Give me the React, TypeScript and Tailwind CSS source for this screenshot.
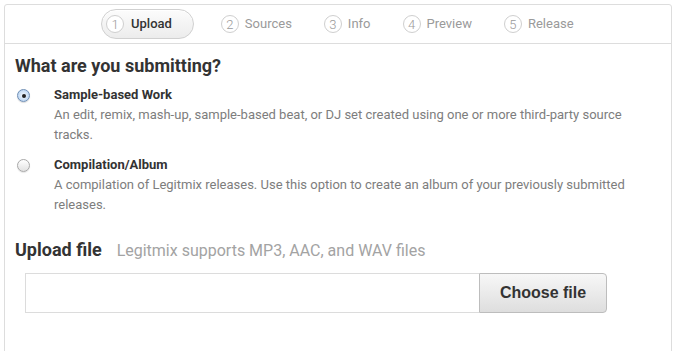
import React from "react";

const steps = ["Sources", "Info", "Preview", "Release"];

function StepNum({ n }: { n: number }) {
  return (
    <span className="flex h-[18px] w-[18px] items-center justify-center rounded-full border border-[#cfcfcf] bg-white text-[13px] font-light leading-none text-[#9a9a9a]">
      {n}
    </span>
  );
}

function Radio({ checked }: { checked?: boolean }) {
  if (checked) {
    return (
      <span className="mt-[4px] ml-[2px] flex h-[13px] w-[13px] items-center justify-center rounded-full border border-[#6f8fb5] bg-[radial-gradient(circle,#e8f2fc_20%,#a9c9ee_100%)] shadow-[0_1px_1px_rgba(0,0,0,0.15)]">
        <span className="h-[4px] w-[4px] rounded-full bg-[#222]" />
      </span>
    );
  }
  return (
    <span className="mt-[4px] ml-[2px] block h-[13px] w-[13px] rounded-full border border-[#a8a8a8] bg-gradient-to-b from-white to-[#e2e2e2] shadow-[0_1px_1px_rgba(0,0,0,0.1)]" />
  );
}

function Option({ checked, title, desc }: { checked?: boolean; title: string; desc: string }) {
  return (
    <div className="flex">
      <div className="w-[39px] shrink-0">
        <Radio checked={checked} />
      </div>
      <div className="w-[590px]">
        <div className="text-[13px] font-bold leading-[20px] text-[#333]">{title}</div>
        <p className="text-[13px] leading-[20px] text-[#7d7d7d]">{desc}</p>
      </div>
    </div>
  );
}

export default function App() {
  return (
    <div className="h-[351px] overflow-hidden bg-white font-['Roboto',sans-serif]">
      <div className="ml-[4px] mt-[4px] h-[360px] w-[668px] rounded-t-[3px] border border-[#dddddd]">
        <div className="flex h-[39px] items-center border-b border-[#dddddd] pl-[96px]">
          <div className="flex h-[30px] items-center gap-[7px] rounded-full border border-[#d0d0d0] bg-gradient-to-b from-[#fcfcfc] to-[#ececec] pl-[4px] pr-[21px] shadow-[inset_0_1px_0_#fff]">
            <StepNum n={1} />
            <span className="text-[13px] font-medium text-[#333]">Upload</span>
          </div>
          {steps.map((s, i) => (
            <div key={s} className={`flex items-center gap-[6px] ${i === 0 ? "ml-[27px]" : "ml-[32px]"}`}>
              <StepNum n={i + 2} />
              <span className="text-[13px] text-[#9a9a9a]">{s}</span>
            </div>
          ))}
        </div>

        <div className="pl-[10px] pt-[11px]">
          <h2 className="text-[18px] font-bold leading-[22px] text-[#333]">What are you submitting?</h2>
          <div className="mt-[8px]">
            <Option
              checked
              title="Sample-based Work"
              desc="An edit, remix, mash-up, sample-based beat, or DJ set created using one or more third-party source tracks."
            />
          </div>
          <div className="mt-[10px]">
            <Option
              title="Compilation/Album"
              desc="A compilation of Legitmix releases. Use this option to create an album of your previously submitted releases."
            />
          </div>

          <div className="mt-[23px] flex items-baseline gap-[15px] leading-[24px]">
            <span className="text-[18px] font-bold text-[#333]">Upload file</span>
            <span className="text-[16px] text-[#a3a3a3]">Legitmix supports MP3, AAC, and WAV files</span>
          </div>

          <div className="ml-[10px] mt-[10px] flex h-[40px]">
            <div className="w-[454px] border border-r-0 border-[#dcdcdc] bg-white" />
            <button className="w-[128px] rounded-r-[4px] border border-[#bdbdbd] bg-gradient-to-b from-[#f7f7f7] to-[#dedede] font-['Liberation_Sans',sans-serif] text-[16px] font-bold text-[#333]">
              Choose file
            </button>
          </div>
        </div>
      </div>
    </div>
  );
}
